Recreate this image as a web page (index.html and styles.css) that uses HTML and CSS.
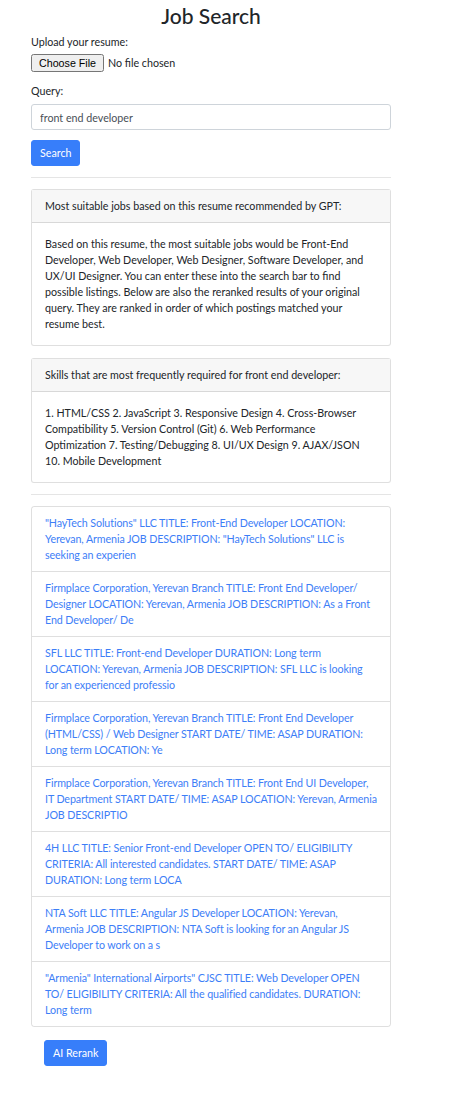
FILE: index.html
```html
<!DOCTYPE html>
<html lang="en">
<head>
<meta charset="utf-8">
<title>Job Search</title>
<link rel="stylesheet" href="styles.css">
</head>
<body>
<div class="container">
  <h2 class="title">Job Search</h2>
  <form class="search-form">
    <div class="form-group">
      <label class="label" for="resume">Upload your resume:</label>
      <input class="file-input" type="file" id="resume">
    </div>
    <div class="form-group">
      <label class="label" for="query">Query:</label>
      <input class="text-input" type="text" id="query" value="front end developer">
    </div>
    <button class="btn" type="button">Search</button>
  </form>
  <hr class="divider">
  <div class="card">
    <div class="card-header">Most suitable jobs based on this resume recommended by GPT:</div>
    <div class="card-body">Based on this resume, the most suitable jobs would be Front-End Developer, Web Developer, Web Designer, Software Developer, and UX/UI Designer. You can enter these into the search bar to find possible listings. Below are also the reranked results of your original query. They are ranked in order of which postings matched your resume best.</div>
  </div>
  <div class="card card-second">
    <div class="card-header">Skills that are most frequently required for front end developer:</div>
    <div class="card-body">1. HTML/CSS 2. JavaScript 3. Responsive Design 4. Cross-Browser Compatibility 5. Version Control (Git) 6. Web Performance Optimization 7. Testing/Debugging 8. UI/UX Design 9. AJAX/JSON 10. Mobile Development</div>
  </div>
  <hr class="divider">
  <ul class="list-group">
    <li class="list-item"><a class="link" href="#">"HayTech Solutions" LLC TITLE: Front-End Developer LOCATION: Yerevan, Armenia JOB DESCRIPTION: "HayTech Solutions" LLC is seeking an experien</a></li>
    <li class="list-item"><a class="link" href="#">Firmplace Corporation, Yerevan Branch TITLE: Front End Developer/ Designer LOCATION: Yerevan, Armenia JOB DESCRIPTION: As a Front End Developer/ De</a></li>
    <li class="list-item"><a class="link" href="#">SFL LLC TITLE: Front-end Developer DURATION: Long term LOCATION: Yerevan, Armenia JOB DESCRIPTION: SFL LLC is looking for an experienced professio</a></li>
    <li class="list-item"><a class="link" href="#">Firmplace Corporation, Yerevan Branch TITLE: Front End Developer (HTML/CSS) / Web Designer START DATE/ TIME: ASAP DURATION: Long term LOCATION: Ye</a></li>
    <li class="list-item"><a class="link" href="#">Firmplace Corporation, Yerevan Branch TITLE: Front End UI Developer, IT Department START DATE/ TIME: ASAP LOCATION: Yerevan, Armenia JOB DESCRIPTIO</a></li>
    <li class="list-item"><a class="link" href="#">4H LLC TITLE: Senior Front-end Developer OPEN TO/ ELIGIBILITY CRITERIA: All interested candidates. START DATE/ TIME: ASAP DURATION: Long term LOCA</a></li>
    <li class="list-item"><a class="link" href="#">NTA Soft LLC TITLE: Angular JS Developer LOCATION: Yerevan, Armenia JOB DESCRIPTION: NTA Soft is looking for an Angular JS Developer to work on a s</a></li>
    <li class="list-item"><a class="link" href="#">"Armenia" International Airports" CJSC TITLE: Web Developer OPEN TO/ ELIGIBILITY CRITERIA: All the qualified candidates. DURATION: Long term</a></li>
  </ul>
  <div class="rerank">
    <button class="btn" type="button">AI Rerank</button>
  </div>
</div>
</body>
</html>
```
FILE: styles.css
```css
* { box-sizing: border-box; }
html, body { margin: 0; padding: 0; background: #fff; }
body {
  font-family: Lato, "Open Sans", "Liberation Sans", sans-serif;
  font-size: 10.7px;
  line-height: 16px;
  color: #212529;
}
.container {
  width: 360px;
  margin-left: 31px;
  padding-top: 3px;
}
.title {
  margin: 0 0 5px;
  font-size: 21px;
  line-height: 26px;
  font-weight: 500;
  text-align: center;
}
.form-group { margin-bottom: 10px; }
.label {
  display: block;
  margin-bottom: 5px;
}
.file-input {
  display: block;
  font-family: inherit;
  font-size: 10.7px;
  height: 19px;
  margin-bottom: 0;
}
.form-group:first-child .label { margin-bottom: 4px; }
.form-group:first-child { margin-bottom: 10px; }
.text-input {
  display: block;
  width: 100%;
  height: 26px;
  padding: 4px 8px;
  border: 1px solid #ced4da;
  border-radius: 3px;
  font-family: inherit;
  font-size: 10.7px;
  color: #495057;
  background: #fff;
}
.btn {
  display: inline-block;
  height: 26px;
  padding: 4px 8px;
  border: 1px solid #377efa;
  border-radius: 3px;
  background: #377efa;
  color: #fff;
  font-family: inherit;
  font-size: 10.7px;
  line-height: 16px;
}
.divider {
  margin: 11px 0;
  border: 0;
  border-top: 1px solid rgba(0,0,0,.1);
}
.card {
  border: 1px solid rgba(0,0,0,.125);
  border-radius: 3px;
  background: #fff;
}
.card-second { margin-top: 12px; }
.card-header {
  padding: 8px 13px;
  background: #f7f7f7;
  border-bottom: 1px solid rgba(0,0,0,.125);
}
.card-body { padding: 13px; }
.list-group {
  list-style: none;
  margin: 0;
  padding: 0;
  border: 1px solid rgba(0,0,0,.125);
  border-radius: 3px;
}
.list-item {
  padding: 8px 13px;
  border-top: 1px solid rgba(0,0,0,.125);
}
.list-item:first-child { border-top: 0; }
.link {
  color: #3d7ef7;
  text-decoration: none;
  letter-spacing: -0.1px;
}
.rerank {
  padding: 13px 13px 0;
}
```
